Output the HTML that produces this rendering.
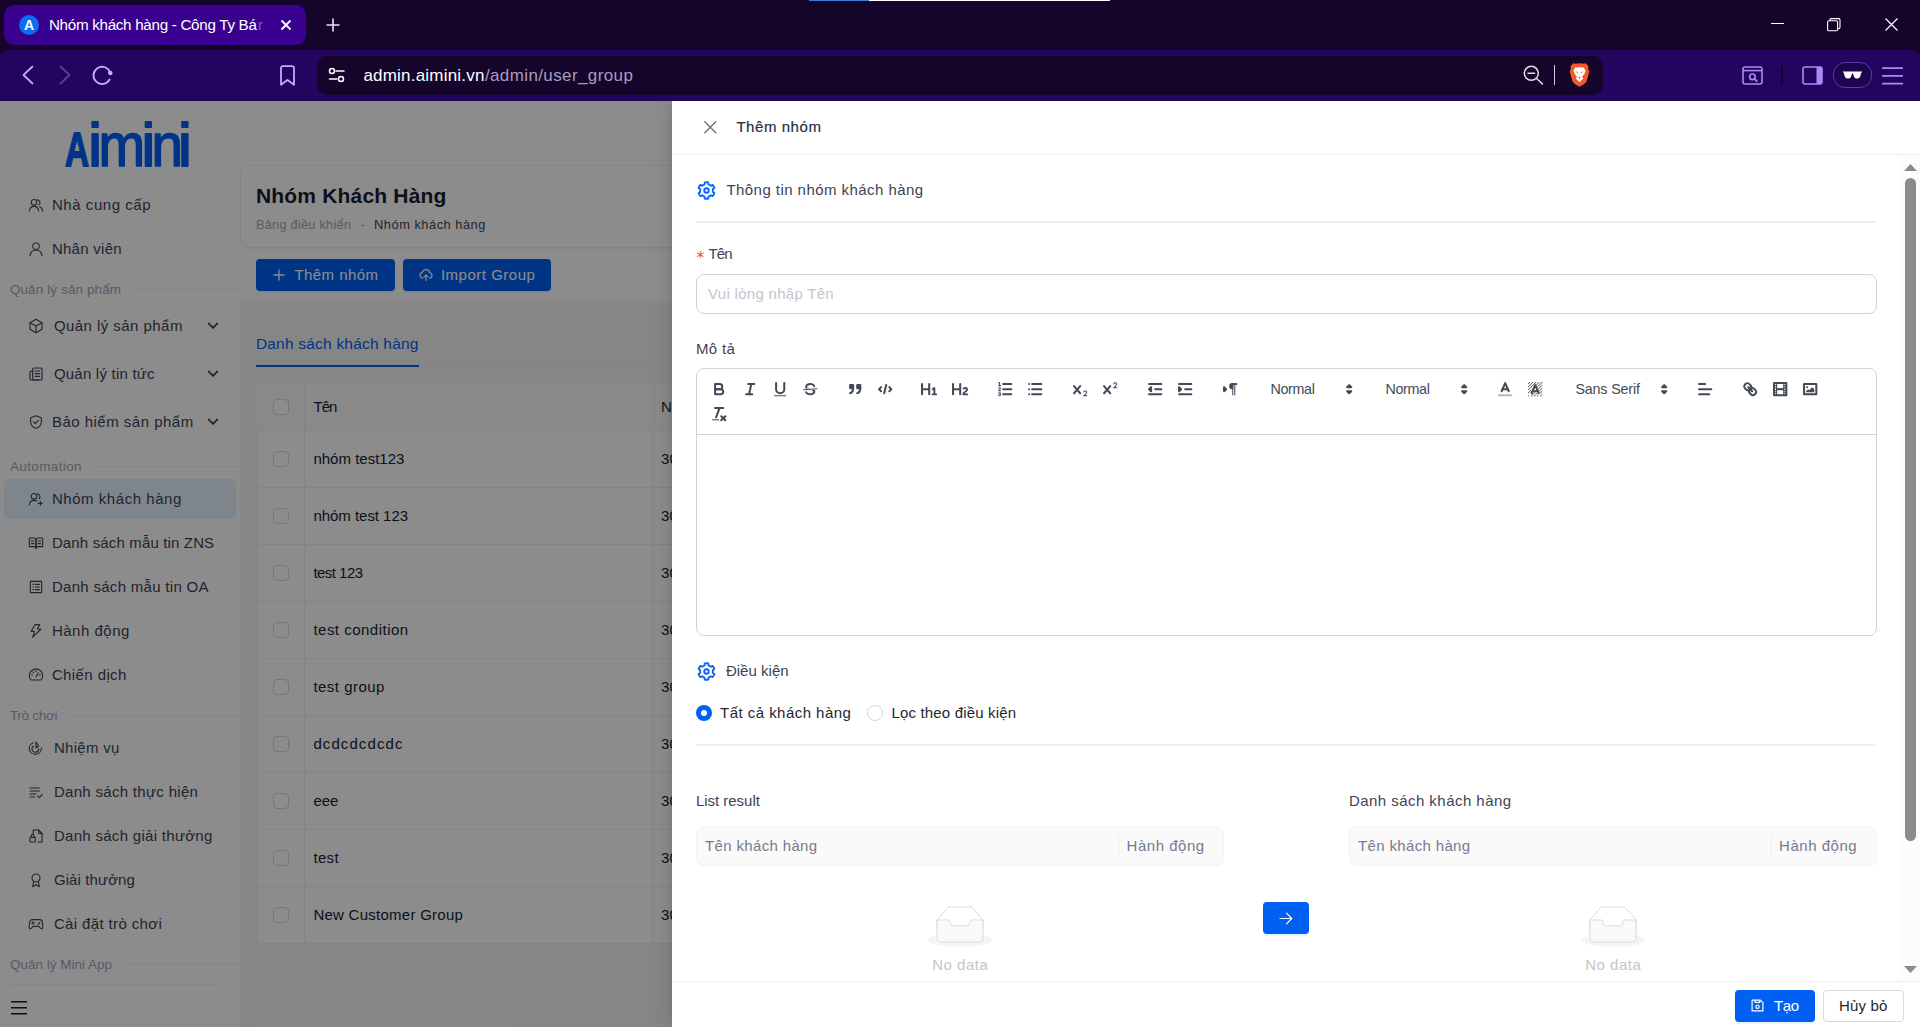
<!DOCTYPE html>
<html lang="vi"><head><meta charset="utf-8"><title>Nhóm khách hàng - Công Ty Bán</title>
<style>
*{box-sizing:border-box;margin:0;padding:0}
html,body{width:1920px;height:1027px;overflow:hidden;background:#fff}
body{font-family:"Liberation Sans",sans-serif;position:relative}
.t{position:absolute;white-space:nowrap;display:block}
.abs{position:absolute}
svg{position:absolute;overflow:visible}
.ic{fill:none;stroke:#3f4254;stroke-width:1.5;stroke-linecap:round;stroke-linejoin:round}
.qs{fill:none;stroke:#444a55;stroke-width:2;stroke-linecap:round;stroke-linejoin:round}
.qf{fill:#444a55}
.qt{stroke-width:1}
.ln{position:absolute;background:#eff2f5;height:1px}
.cb{position:absolute;width:16px;height:16px;border:1px solid #d9d9d9;border-radius:4px;background:#fff;left:273px}
.row{position:absolute;left:257px;width:500px;height:57px;border-bottom:1px solid #f0f0f0}
</style></head>
<body>
<div class="abs" style="left:0;top:101px;width:240px;height:926px;background:#fff"></div><svg style="left:60px;top:116px" width="134" height="56" viewBox="60 116 134 56" font-family="Liberation Sans, sans-serif" fill="#0060f7" stroke="#0060f7" stroke-linejoin="round" stroke-width="1.9"><text y="165.700" font-size="62"><tspan x="65" font-size="48.500" font-weight="700" stroke-width="1.800" textLength="24" lengthAdjust="spacingAndGlyphs">A</tspan><tspan x="88.300">i</tspan><tspan x="98.500" stroke-width="1.600" textLength="46.500" lengthAdjust="spacingAndGlyphs">m</tspan><tspan x="141.400">i</tspan><tspan x="151.500" stroke-width="1.600" textLength="31.500" lengthAdjust="spacingAndGlyphs">n</tspan><tspan x="178.100">i</tspan></text></svg><svg class="ic" style="left:27.7px;top:197.0px;stroke-width:1.65" width="16" height="16" viewBox="0 0 24 24"><circle cx="9" cy="8" r="4.2"/><path d="M2 21c.6-4.6 3.4-7 7-7s6.4 2.400 7 7"/><path d="M14 4.300a4.200 4.200 0 0 1 2.500 7.400M17.500 14.500c2.600.9 4.100 3.200 4.500 6.500"/></svg><span class="t" style="left:51.9px;top:194.69px;font-size:15px;line-height:20px;color:#3f4254;letter-spacing:0.56px;">Nhà cung cấp</span><svg class="ic" style="left:27.7px;top:241.0px;stroke-width:1.65" width="16" height="16" viewBox="0 0 24 24"><circle cx="12" cy="8" r="5"/><path d="M3 22c.8-5.400 4.400-8.500 9-8.500s8.200 3.100 9 8.500"/></svg><span class="t" style="left:51.9px;top:238.69px;font-size:15px;line-height:20px;color:#3f4254;letter-spacing:0.27px;">Nhân viên</span><span class="t" style="left:9.9px;top:279.83px;font-size:13.5px;line-height:20px;color:#a1a5b7;letter-spacing:0.11px;">Quản lý sản phẩm</span><div class="ln" style="left:132px;top:289px;width:108px"></div><svg class="ic" style="left:28px;top:318.0px;stroke-width:1.65" width="16" height="16" viewBox="0 0 24 24"><path d="M12 2l9 5v10l-9 5l-9-5V7z"/><path d="M3 7l9 5l9-5M12 12v10"/></svg><span class="t" style="left:53.9px;top:315.69px;font-size:15px;line-height:20px;color:#3f4254;letter-spacing:0.45px;">Quản lý sản phẩm</span><svg style="left:207px;top:322px" width="12" height="8" viewBox="0 0 12 8"><path d="M1.8 1.6L6 5.8L10.2 1.6" fill="none" stroke="#3f4254" stroke-width="1.9" stroke-linecap="round" stroke-linejoin="round"/></svg><svg class="ic" style="left:28px;top:366.0px;stroke-width:1.65" width="16" height="16" viewBox="0 0 24 24"><rect x="7" y="3" width="14" height="18" rx="1.500"/><path d="M7 8H4.500A1.500 1.500 0 0 0 3 9.500V19a2 2 0 0 0 2 2h12"/><path d="M10.500 7.500h7M10.500 11.500h7M10.500 15.500h7"/></svg><span class="t" style="left:53.9px;top:363.69px;font-size:15px;line-height:20px;color:#3f4254;letter-spacing:0.22px;">Quản lý tin tức</span><svg style="left:207px;top:370px" width="12" height="8" viewBox="0 0 12 8"><path d="M1.8 1.6L6 5.8L10.2 1.6" fill="none" stroke="#3f4254" stroke-width="1.9" stroke-linecap="round" stroke-linejoin="round"/></svg><svg class="ic" style="left:27.7px;top:414.0px;stroke-width:1.65" width="16" height="16" viewBox="0 0 24 24"><path d="M12 2.500l8 3v6c0 5-3.400 8.600-8 10c-4.600-1.400-8-5-8-10v-6z"/><path d="M8.500 12l2.500 2.500l4.500-5"/></svg><span class="t" style="left:51.9px;top:411.69px;font-size:15px;line-height:20px;color:#3f4254;letter-spacing:0.49px;">Bảo hiểm sản phẩm</span><svg style="left:207px;top:418px" width="12" height="8" viewBox="0 0 12 8"><path d="M1.8 1.6L6 5.8L10.2 1.6" fill="none" stroke="#3f4254" stroke-width="1.9" stroke-linecap="round" stroke-linejoin="round"/></svg><span class="t" style="left:9.9px;top:456.83px;font-size:13.5px;line-height:20px;color:#a1a5b7;letter-spacing:0.38px;">Automation</span><div class="ln" style="left:92px;top:466px;width:148px"></div><div class="abs" style="left:4px;top:479px;width:232px;height:40px;background:#e6f4ff;border-radius:5px"></div><svg class="ic" style="left:27.7px;top:491.0px;stroke-width:1.65" width="16" height="16" viewBox="0 0 24 24"><circle cx="9" cy="8" r="4.200"/><path d="M2 21c.6-4.600 3.400-7 7-7c1.600 0 3 .4 4.200 1.200"/><path d="M14 4.300a4.200 4.200 0 0 1 2.500 7.400"/><path d="M18.500 15.500v6M15.500 18.500h6"/></svg><span class="t" style="left:51.9px;top:488.69px;font-size:15px;line-height:20px;color:#3f4254;letter-spacing:0.55px;">Nhóm khách hàng</span><svg class="ic" style="left:27.7px;top:535.0px;stroke-width:1.65" width="16" height="16" viewBox="0 0 24 24"><path d="M12 6v14"/><path d="M2 4.500h7a3 3 0 0 1 3 3v12.500a2.500 2.500 0 0 0-2.500-2.500H2zM22 4.500h-7a3 3 0 0 0-3 3v12.500a2.500 2.500 0 0 1 2.500-2.500H22z"/><path d="M5 9h4M5 13h4M15 9h4M15 13h4"/></svg><span class="t" style="left:51.9px;top:532.7px;font-size:15px;line-height:20px;color:#3f4254;letter-spacing:0.15px;">Danh sách mẫu tin ZNS</span><svg class="ic" style="left:27.7px;top:579.0px;stroke-width:1.65" width="16" height="16" viewBox="0 0 24 24"><rect x="3.500" y="3.500" width="17" height="17" rx="0.300"/><path d="M7.500 8h1M11 8h6M7.500 12h1M11 12h6M7.500 16h1M11 16h6"/></svg><span class="t" style="left:51.9px;top:576.7px;font-size:15px;line-height:20px;color:#3f4254;letter-spacing:0.30px;">Danh sách mẫu tin OA</span><svg class="ic" style="left:27.7px;top:623.0px;stroke-width:1.65" width="16" height="16" viewBox="0 0 24 24"><path d="M10.500 2.500h7l-3.500 6.500h5.500L7 21.500l2.800-9H4.800z"/></svg><span class="t" style="left:51.9px;top:620.7px;font-size:15px;line-height:20px;color:#3f4254;letter-spacing:0.51px;">Hành động</span><svg class="ic" style="left:27.7px;top:667.0px;stroke-width:1.65" width="16" height="16" viewBox="0 0 24 24"><path d="M4.500 19.500a10 10 0 1 1 15 0z"/><path d="M12 14.500l3.500-5.500"/><path d="M5.500 12h1.500M12 5.500v1.500M18.500 12H17M7.400 7.400l1 1"/></svg><span class="t" style="left:51.9px;top:664.7px;font-size:15px;line-height:20px;color:#3f4254;letter-spacing:0.40px;">Chiến dịch</span><span class="t" style="left:9.9px;top:705.83px;font-size:13.5px;line-height:20px;color:#a1a5b7;letter-spacing:-0.27px;">Trò chơi</span><div class="ln" style="left:68px;top:715px;width:172px"></div><svg class="ic" style="left:28px;top:740.0px;stroke-width:1.65" width="16" height="16" viewBox="0 0 24 24"><path d="M12 3v9l4-3z"/><path d="M8 4a9 9 0 1 0 12 8"/><path d="M8.500 9a5 5 0 1 0 7.500 4"/></svg><span class="t" style="left:53.9px;top:737.7px;font-size:15px;line-height:20px;color:#3f4254;letter-spacing:0.31px;">Nhiệm vụ</span><svg class="ic" style="left:28px;top:784.0px;stroke-width:1.65" width="16" height="16" viewBox="0 0 24 24"><path d="M3 6h14M3 10.500h14M3 15h9M3 19.500h7"/><path d="M14.500 18l2.500 2.500l4.500-5"/></svg><span class="t" style="left:53.9px;top:781.7px;font-size:15px;line-height:20px;color:#3f4254;letter-spacing:0.31px;">Danh sách thực hiện</span><svg class="ic" style="left:28px;top:828.0px;stroke-width:1.65" width="16" height="16" viewBox="0 0 24 24"><path d="M8 3h8l5 5v12.500a.5.500 0 0 1-.5.500H15"/><path d="M16 3v5h5"/><rect x="3" y="14" width="8" height="7" rx="1"/><path d="M5 14v-2.500a2 2 0 0 1 4 0V14"/><path d="M8 3v5"/></svg><span class="t" style="left:53.9px;top:825.7px;font-size:15px;line-height:20px;color:#3f4254;letter-spacing:0.30px;">Danh sách giải thưởng</span><svg class="ic" style="left:28px;top:872.0px;stroke-width:1.65" width="16" height="16" viewBox="0 0 24 24"><circle cx="12" cy="9" r="6"/><path d="M8.500 14.500L7 22l5-3l5 3l-1.500-7.500"/></svg><span class="t" style="left:53.9px;top:869.7px;font-size:15px;line-height:20px;color:#3f4254;letter-spacing:0.11px;">Giải thưởng</span><svg class="ic" style="left:28px;top:916.0px;stroke-width:1.65" width="16" height="16" viewBox="0 0 24 24"><path d="M6.500 5.500h11a4 4 0 0 1 4 4l.8 7.500a2 2 0 0 1-3.600 1.300L16 15.500H8l-2.700 2.800A2 2 0 0 1 1.700 17l.8-7.500a4 4 0 0 1 4-4z"/><path d="M7.500 8.500v4M5.500 10.500h4M15 12.500l3-3"/></svg><span class="t" style="left:53.9px;top:913.7px;font-size:15px;line-height:20px;color:#3f4254;letter-spacing:0.37px;">Cài đặt trò chơi</span><span class="t" style="left:9.9px;top:954.83px;font-size:13.5px;line-height:20px;color:#a1a5b7;">Quản lý Mini App</span><div class="ln" style="left:122px;top:964px;width:118px"></div><div class="ln" style="left:10px;top:984px;width:207px"></div><svg style="left:11px;top:1000px" width="16" height="16" viewBox="0 0 16 16"><path d="M0 1.800H16M0 7.800H16M0 13.800H16" stroke="#181c32" stroke-width="1.600" fill="none"/></svg>
<div class="abs" style="left:240px;top:101px;width:1680px;height:926px;background:#f5f5f5"></div><div class="abs" style="left:240px;top:101px;width:1680px;height:200px;background:#fff"></div><div class="abs" style="left:240px;top:165px;width:1680px;height:83px;border:1px solid #f1f1f4;border-radius:8px;box-shadow:0 2px 4px rgba(0,0,0,.03)"></div><span class="t" style="left:255.9px;top:182.17px;font-size:21px;line-height:28px;color:#181c32;font-weight:700;letter-spacing:0.19px;">Nhóm Khách Hàng</span><span class="t" style="left:255.9px;top:215.39px;font-size:12.8px;line-height:20px;color:#a1a5b7;letter-spacing:0.24px;">Bảng điều khiển</span><span class="t" style="left:360.9px;top:215.39px;font-size:12.8px;line-height:20px;color:#a1a5b7;">-</span><span class="t" style="left:374.1px;top:215.39px;font-size:12.8px;line-height:20px;color:#3f4254;letter-spacing:0.53px;">Nhóm khách hàng</span><div class="abs" style="left:256px;top:259px;width:139px;height:32px;background:#0060f2;border-radius:4px;box-shadow:0 2px 0 rgba(5,95,255,.08)"></div><svg style="left:273px;top:269px" width="12" height="12" viewBox="0 0 12 12"><path d="M6 0.500V11.500M0.500 6H11.500" stroke="#fff" stroke-width="1.300" fill="none"/></svg><span class="t" style="left:294.4px;top:264.89px;font-size:15px;line-height:20px;color:#fff;letter-spacing:0.46px;">Thêm nhóm</span><div class="abs" style="left:403px;top:259px;width:148px;height:32px;background:#0060f2;border-radius:4px;box-shadow:0 2px 0 rgba(5,95,255,.08)"></div><svg style="left:419px;top:268.500px" width="14" height="13" viewBox="0 0 14 13"><path d="M3.600 9.200A3 3 0 0 1 3.400 3.300A3.800 3.800 0 0 1 10.700 3.500A2.900 2.900 0 0 1 10.500 9.200" fill="none" stroke="#fff" stroke-width="1.200" stroke-linecap="round"/><path d="M7 11.500V6M5 7.800L7 5.800L9 7.800" fill="none" stroke="#fff" stroke-width="1.200" stroke-linecap="round" stroke-linejoin="round"/></svg><span class="t" style="left:440.9px;top:264.89px;font-size:15px;line-height:20px;color:#fff;letter-spacing:0.51px;">Import Group</span><span class="t" style="left:255.9px;top:333.65px;font-size:15.5px;line-height:20px;color:#0060f2;letter-spacing:0.21px;">Danh sách khách hàng</span><div class="abs" style="left:256px;top:366px;width:1640px;height:1px;background:#ececef"></div><div class="abs" style="left:256px;top:365px;width:163px;height:2px;background:#0060f2"></div><div class="abs" style="left:257px;top:383.500px;width:1640px;height:560px;background:#fff;border:1px solid #f0f0f0;border-radius:8px 8px 0 0"></div><div class="abs" style="left:257px;top:384px;width:1640px;height:46.500px;background:#fafafa;border-bottom:1px solid #f0f0f0"></div><div class="abs" style="left:304px;top:384px;width:1px;height:559px;background:#f0f0f0"></div><div class="abs" style="left:652px;top:384px;width:1px;height:559px;background:#f0f0f0"></div><div class="cb" style="top:399px"></div><span class="t" style="left:313.6px;top:397.19px;font-size:15px;line-height:20px;color:#181c32;letter-spacing:-1.03px;">Tên</span><span class="t" style="left:660.9px;top:397.19px;font-size:15px;line-height:20px;color:#181c32;letter-spacing:0.4px">Ngày</span><div class="abs" style="left:257px;top:487px;width:1640px;height:1px;background:#f0f0f0"></div><div class="cb" style="top:451px"></div><span class="t" style="left:313.4px;top:448.69px;font-size:15px;line-height:20px;color:#181c32;letter-spacing:0.01px;">nhóm test123</span><span class="t" style="left:660.9px;top:448.69px;font-size:15px;line-height:20px;color:#181c32;letter-spacing:0.3px">30</span><div class="abs" style="left:257px;top:544px;width:1640px;height:1px;background:#f0f0f0"></div><div class="cb" style="top:508px"></div><span class="t" style="left:313.4px;top:505.69px;font-size:15px;line-height:20px;color:#181c32;letter-spacing:-0.03px;">nhóm test 123</span><span class="t" style="left:660.9px;top:505.69px;font-size:15px;line-height:20px;color:#181c32;letter-spacing:0.3px">30</span><div class="abs" style="left:257px;top:601px;width:1640px;height:1px;background:#f0f0f0"></div><div class="cb" style="top:565px"></div><span class="t" style="left:313.4px;top:562.7px;font-size:15px;line-height:20px;color:#181c32;letter-spacing:-0.53px;">test 123</span><span class="t" style="left:660.9px;top:562.7px;font-size:15px;line-height:20px;color:#181c32;letter-spacing:0.3px">30</span><div class="abs" style="left:257px;top:658px;width:1640px;height:1px;background:#f0f0f0"></div><div class="cb" style="top:622px"></div><span class="t" style="left:313.4px;top:619.7px;font-size:15px;line-height:20px;color:#181c32;letter-spacing:0.49px;">test condition</span><span class="t" style="left:660.9px;top:619.7px;font-size:15px;line-height:20px;color:#181c32;letter-spacing:0.3px">30</span><div class="abs" style="left:257px;top:715px;width:1640px;height:1px;background:#f0f0f0"></div><div class="cb" style="top:679px"></div><span class="t" style="left:313.4px;top:676.7px;font-size:15px;line-height:20px;color:#181c32;letter-spacing:0.48px;">test group</span><span class="t" style="left:660.9px;top:676.7px;font-size:15px;line-height:20px;color:#181c32;letter-spacing:0.3px">30</span><div class="abs" style="left:257px;top:772px;width:1640px;height:1px;background:#f0f0f0"></div><div class="cb" style="top:736px"></div><span class="t" style="left:313.4px;top:733.7px;font-size:15px;line-height:20px;color:#181c32;letter-spacing:1.09px;">dcdcdcdcdc</span><span class="t" style="left:660.9px;top:733.7px;font-size:15px;line-height:20px;color:#181c32;letter-spacing:0.3px">30</span><div class="abs" style="left:257px;top:829px;width:1640px;height:1px;background:#f0f0f0"></div><div class="cb" style="top:793px"></div><span class="t" style="left:313.4px;top:790.7px;font-size:15px;line-height:20px;color:#181c32;letter-spacing:-0.02px;">eee</span><span class="t" style="left:660.9px;top:790.7px;font-size:15px;line-height:20px;color:#181c32;letter-spacing:0.3px">30</span><div class="abs" style="left:257px;top:886px;width:1640px;height:1px;background:#f0f0f0"></div><div class="cb" style="top:850px"></div><span class="t" style="left:313.4px;top:847.7px;font-size:15px;line-height:20px;color:#181c32;letter-spacing:0.34px;">test</span><span class="t" style="left:660.9px;top:847.7px;font-size:15px;line-height:20px;color:#181c32;letter-spacing:0.3px">30</span><div class="abs" style="left:257px;top:943px;width:1640px;height:1px;background:#f0f0f0"></div><div class="cb" style="top:907px"></div><span class="t" style="left:313.4px;top:904.7px;font-size:15px;line-height:20px;color:#181c32;letter-spacing:0.26px;">New Customer Group</span><span class="t" style="left:660.9px;top:904.7px;font-size:15px;line-height:20px;color:#181c32;letter-spacing:0.3px">30</span>
<div class="abs" style="left:0;top:101px;width:1920px;height:926px;background:rgba(0,0,0,.45)"></div>
<div class="abs" style="left:672px;top:101px;width:1248px;height:926px;background:#fff;box-shadow:-6px 0 16px rgba(0,0,0,.08),-3px 0 6px -4px rgba(0,0,0,.12)"></div><svg style="left:703.600px;top:120.700px" width="12.600" height="12.600" viewBox="0 0 13 13"><path d="M0.800 0.800L12.200 12.200M12.200 0.800L0.800 12.200" stroke="#6c6c72" stroke-width="1.350" fill="none" stroke-linecap="round"/></svg><span class="t" style="left:736.4px;top:114.99px;font-size:15px;line-height:24px;color:#2b2f42;letter-spacing:0.56px;-webkit-text-stroke:0.2px #2b2f42;">Thêm nhóm</span><div class="abs" style="left:672px;top:154px;width:1248px;height:1px;background:#f0f0f0"></div><svg style="left:695.650px;top:179.6px;fill:none;stroke:#0d65f8;stroke-width:1.850;stroke-linejoin:round;stroke-linecap:round" width="21" height="21" viewBox="0 0 21 21"><path d="M8.58 4.40L8.70 2.40A8.30 8.30 0 0 1 12.30 2.40L12.42 4.40A6.40 6.40 0 0 1 14.82 5.78L16.62 4.89A8.30 8.30 0 0 1 18.42 8.00L16.75 9.11A6.40 6.40 0 0 1 16.75 11.89L18.42 13.00A8.30 8.30 0 0 1 16.62 16.11L14.82 15.22A6.40 6.40 0 0 1 12.42 16.60L12.30 18.60A8.30 8.30 0 0 1 8.70 18.60L8.58 16.60A6.40 6.40 0 0 1 6.18 15.22L4.38 16.11A8.30 8.30 0 0 1 2.58 13.00L4.25 11.89A6.40 6.40 0 0 1 4.25 9.11L2.58 8.00A8.30 8.30 0 0 1 4.38 4.89L6.18 5.78A6.40 6.40 0 0 1 8.58 4.40Z"/><circle cx="10.500" cy="10.500" r="2.250"/></svg><span class="t" style="left:726.4px;top:178.0px;font-size:15px;line-height:24px;color:#3f4254;letter-spacing:0.45px;">Thông tin nhóm khách hàng</span><div class="abs" style="left:696px;top:221px;width:1180px;height:2px;background:#efeff2"></div><span class="t" style="left:696.5px;top:247.75px;font-size:15.5px;line-height:20px;color:#f24b1c;font-family:'DejaVu Sans',sans-serif;">*</span><span class="t" style="left:708.6px;top:243.69px;font-size:15px;line-height:20px;color:#3f4254;letter-spacing:-0.93px;">Tên</span><div class="abs" style="left:696px;top:274px;width:1181px;height:40px;border:1px solid #d2d3d9;border-radius:8px;background:#fff"></div><span class="t" style="left:708.1px;top:283.69px;font-size:15px;line-height:20px;color:#c4c4cc;letter-spacing:0.29px;">Vui lòng nhập Tên</span><span class="t" style="left:695.9px;top:338.69px;font-size:15px;line-height:20px;color:#3f4254;letter-spacing:0.37px;">Mô tả</span><div class="abs" style="left:696px;top:368px;width:1181px;height:268px;border:1px solid #d2d3d9;border-radius:8px;background:#fff"></div><div class="abs" style="left:697px;top:434px;width:1179px;height:1px;background:#d2d3d9"></div><svg style="left:710.4px;top:380.3px" width="18.4" height="18.4" viewBox="0 0 18 18"><path class="qs" d="M5,4H9.5A2.5,2.5,0,0,1,12,6.500v0A2.500,2.500,0,0,1,9.500,9H5V4Z"/><path class="qs" d="M5,9h5.500A2.500,2.500,0,0,1,13,11.500v0A2.500,2.500,0,0,1,10.500,14H5V9Z"/></svg><svg style="left:740.6px;top:380.3px" width="18.4" height="18.4" viewBox="0 0 18 18"><line class="qs" x1="7" x2="13" y1="4" y2="4"/><line class="qs" x1="5" x2="11" y1="14" y2="14"/><line class="qs" x1="8" x2="10" y1="14" y2="4"/></svg><svg style="left:770.8px;top:380.3px" width="18.4" height="18.4" viewBox="0 0 18 18"><path class="qs" d="M5,3V9a4.012,4.012,0,0,0,4,4H9a4.012,4.012,0,0,0,4-4V3"/><rect class="qf" height="1" rx="0.500" ry="0.500" width="12" x="3" y="15"/></svg><svg style="left:801.0px;top:380.3px" width="18.4" height="18.4" viewBox="0 0 18 18"><line class="qs qt" x1="15.500" x2="2.500" y1="8.500" y2="9.500"/><path class="qf" d="M9.007,8C6.542,7.791,6,7.519,6,6.500,6,5.792,7.283,5,9,5c1.571,0,2.765.679,2.969,1.309a1,1,0,0,0,1.900-.617C13.356,4.106,11.354,3,9,3,6.200,3,4,4.538,4,6.500a3.200,3.200,0,0,0,.5,1.843Z"/><path class="qf" d="M8.984,10C11.457,10.208,12,10.479,12,11.500c0,0.708-1.283,1.500-3,1.500-1.571,0-2.765-.679-2.969-1.309a1,1,0,1,0-1.900.617C4.644,13.894,6.646,15,9,15c2.800,0,5-1.538,5-3.500a3.200,3.200,0,0,0-.5-1.843Z"/></svg><svg style="left:846.0px;top:380.3px" width="18.4" height="18.4" viewBox="0 0 18 18"><rect class="qs qf" height="3" width="3" x="4" y="5"/><rect class="qs qf" height="3" width="3" x="11" y="5"/><path class="qs qf" d="M7,8c0,4.031-3,5-3,5"/><path class="qs qf" d="M14,8c0,4.031-3,5-3,5"/></svg><svg style="left:875.8px;top:380.3px" width="18.4" height="18.4" viewBox="0 0 18 18"><polyline class="qs" points="5 7 3 9 5 11"/><polyline class="qs" points="13 7 15 9 13 11"/><line class="qs" x1="10" x2="8" y1="5" y2="13"/></svg><svg style="left:920.3px;top:380.3px" width="18.4" height="18.4" viewBox="0 0 18 18"><path class="qf" d="M10,4V14a1,1,0,0,1-2,0V10H3v4a1,1,0,0,1-2,0V4A1,1,0,0,1,3,4V8H8V4a1,1,0,0,1,2,0Zm6.068,9.209H14.990V7.599a.541.541,0,0,0-.605-.605h-.627a1.011,1.011,0,0,0-.748.297L11.645,8.566a.544.544,0,0,0-.022.858l.286.308a.539.539,0,0,0,.847.033l.099-.088a1.214,1.214,0,0,0,.242-.353h.022s-.011.309-.011.605V13.209H12.041a.541.541,0,0,0-.605.605v.439a.541.541,0,0,0,.605.605h4.027a.541.541,0,0,0,.605-.605v-.439A.541.541,0,0,0,16.068,13.209Z"/></svg><svg style="left:950.5px;top:380.3px" width="18.4" height="18.4" viewBox="0 0 18 18"><path class="qf" d="M16.740,13.814v.439a.541.541,0,0,1-.605.605H11.855a.584.584,0,0,1-.649-.605V14.013c0-2.905,3.399-3.422,3.399-4.555a.777.777,0,0,0-.847-.781,1.177,1.177,0,0,0-.836.385c-.275.264-.561.374-.858.132l-.429-.341c-.308-.242-.385-.518-.154-.814a2.972,2.972,0,0,1,2.454-1.177,2.454,2.454,0,0,1,2.684,2.409c0,2.453-3.179,2.927-3.278,3.938h2.794A.541.541,0,0,1,16.740,13.814ZM9,3A1,1,0,0,0,8,4V8H3V4A1,1,0,0,0,1,4V14a1,1,0,0,0,2,0V10H8v4a1,1,0,0,0,2,0V4A1,1,0,0,0,9,3Z"/></svg><svg style="left:995.8px;top:380.3px" width="18.4" height="18.4" viewBox="0 0 18 18"><line class="qs" x1="7" x2="15" y1="4" y2="4"/><line class="qs" x1="7" x2="15" y1="9" y2="9"/><line class="qs" x1="7" x2="15" y1="14" y2="14"/><line class="qs qt" x1="2.500" x2="4.500" y1="5.500" y2="5.500"/><path class="qf" d="M3.500,6A0.500,0.500,0,0,1,3,5.500V3.085l-0.276.138A0.500,0.500,0,0,1,2.053,3c-0.124-.247-0.023-0.324.224-0.447l1-.5A0.500,0.500,0,0,1,4,2.500v3A0.500,0.500,0,0,1,3.500,6Z"/><path class="qs qt" d="M4.500,10.500h-2c0-.234,1.850-1.076,1.850-2.234A0.959,0.959,0,0,0,2.500,8.156"/><path class="qs qt" d="M2.500,14.846a0.959,0.959,0,0,0,1.850-.109A0.700,0.700,0,0,0,3.750,14a0.688,0.688,0,0,0,.6-0.736,0.959,0.959,0,0,0-1.850-.109"/></svg><svg style="left:1026.0px;top:380.3px" width="18.4" height="18.4" viewBox="0 0 18 18"><line class="qs" x1="6" x2="15" y1="4" y2="4"/><line class="qs" x1="6" x2="15" y1="9" y2="9"/><line class="qs" x1="6" x2="15" y1="14" y2="14"/><line class="qs" x1="3" x2="3" y1="4" y2="4"/><line class="qs" x1="3" x2="3" y1="9" y2="9"/><line class="qs" x1="3" x2="3" y1="14" y2="14"/></svg><svg style="left:1070.8px;top:380.3px" width="18.4" height="18.4" viewBox="0 0 18 18"><path class="qf" d="M15.500,15H13.861a3.858,3.858,0,0,0,1.914-2.975,1.800,1.800,0,0,0-1.600-1.751A1.921,1.921,0,0,0,12.021,11.700a0.500,0.500,0,1,0,.957.291a0.914,0.914,0,0,1,1.053-.725,0.810,0.810,0,0,1,.744.762c0,1.076-1.170,1.870-1.940,2.431A1.456,1.456,0,0,0,12,15.500a0.500,0.500,0,0,0,.5.500h3A0.500,0.500,0,0,0,15.500,15Z"/><path class="qf" d="M9.650,5.241a1,1,0,0,0-1.409.108L6,7.964,3.759,5.349a1,1,0,1,0-1.519,1.300L4.683,9.500,2.241,12.350a1,1,0,1,0,1.519,1.300L6,11.036,8.241,13.650a1,1,0,0,0,1.519-1.300L7.317,9.500,9.759,6.651A1,1,0,0,0,9.650,5.241Z"/></svg><svg style="left:1100.8px;top:380.3px" width="18.4" height="18.4" viewBox="0 0 18 18"><path class="qf" d="M15.500,7H13.861a4.015,4.015,0,0,0,1.914-2.975,1.800,1.800,0,0,0-1.600-1.751A1.922,1.922,0,0,0,12.021,3.700a0.500,0.500,0,1,0,.957.291,0.917,0.917,0,0,1,1.053-.725,0.810,0.810,0,0,1,.744.762c0,1.077-1.164,1.925-1.934,2.486A1.423,1.423,0,0,0,12,7.500a0.500,0.500,0,0,0,.5.500h3A0.500,0.500,0,0,0,15.500,7Z"/><path class="qf" d="M9.650,5.241a1,1,0,0,0-1.409.108L6,7.964,3.759,5.349a1,1,0,1,0-1.519,1.300L4.683,9.500,2.241,12.350a1,1,0,1,0,1.519,1.300L6,11.036,8.241,13.650a1,1,0,0,0,1.519-1.300L7.317,9.500,9.759,6.651A1,1,0,0,0,9.650,5.241Z"/></svg><svg style="left:1145.8px;top:380.3px" width="18.4" height="18.4" viewBox="0 0 18 18"><line class="qs" x1="3" x2="15" y1="14" y2="14"/><line class="qs" x1="3" x2="15" y1="4" y2="4"/><line class="qs" x1="9" x2="15" y1="9" y2="9"/><polyline class="qs" points="5 7 5 11 3 9 5 7"/></svg><svg style="left:1175.8px;top:380.3px" width="18.4" height="18.4" viewBox="0 0 18 18"><line class="qs" x1="3" x2="15" y1="14" y2="14"/><line class="qs" x1="3" x2="15" y1="4" y2="4"/><line class="qs" x1="9" x2="15" y1="9" y2="9"/><polyline class="qs qf" points="3 7 3 11 5 9 3 7"/></svg><svg style="left:1220.8px;top:380.3px" width="18.4" height="18.4" viewBox="0 0 18 18"><polygon class="qs qf" points="3 11 5 9 3 7 3 11"/><line class="qs qf" x1="15" x2="11" y1="4" y2="4"/><path class="qf" d="M11,3a3,3,0,0,0,0,6h1V3H11Z"/><rect class="qf" height="11" width="1" x="11" y="4"/><rect class="qf" height="11" width="1" x="13" y="4"/></svg><svg style="left:1339.8px;top:380.3px" width="18.4" height="18.4" viewBox="0 0 18 18"><polygon class="qs" points="7 11 9 13 11 11 7 11"/><polygon class="qs" points="7 7 9 5 11 7 7 7"/></svg><svg style="left:1454.8px;top:380.3px" width="18.4" height="18.4" viewBox="0 0 18 18"><polygon class="qs" points="7 11 9 13 11 11 7 11"/><polygon class="qs" points="7 7 9 5 11 7 7 7"/></svg><svg style="left:1495.8px;top:380.3px" width="18.4" height="18.4" viewBox="0 0 18 18"><line class="qs" style="opacity:.4" x1="3" x2="15" y1="15" y2="15"/><polyline class="qs" points="5.500 11 9 3 12.500 11"/><line class="qs" x1="11.630" x2="6.380" y1="9" y2="9"/></svg><svg style="left:1525.8px;top:380.3px" width="18.4" height="18.4" viewBox="0 0 18 18"><rect class="qf" x="3" y="2" width="1" height="1"/><rect class="qf" x="6" y="2" width="1" height="1"/><rect class="qf" x="9" y="2" width="1" height="1"/><rect class="qf" x="12" y="2" width="1" height="1"/><rect class="qf" x="15" y="2" width="1" height="1"/><rect class="qf" x="2" y="3" width="1" height="1"/><rect class="qf" x="5" y="3" width="1" height="1"/><rect class="qf" x="8" y="3" width="1" height="1"/><rect class="qf" x="11" y="3" width="1" height="1"/><rect class="qf" x="14" y="3" width="1" height="1"/><rect class="qf" x="4" y="4" width="1" height="1"/><rect class="qf" x="7" y="4" width="1" height="1"/><rect class="qf" x="10" y="4" width="1" height="1"/><rect class="qf" x="13" y="4" width="1" height="1"/><rect class="qf" x="3" y="5" width="1" height="1"/><rect class="qf" x="6" y="5" width="1" height="1"/><rect class="qf" x="12" y="5" width="1" height="1"/><rect class="qf" x="15" y="5" width="1" height="1"/><rect class="qf" x="2" y="6" width="1" height="1"/><rect class="qf" x="5" y="6" width="1" height="1"/><rect class="qf" x="11" y="6" width="1" height="1"/><rect class="qf" x="14" y="6" width="1" height="1"/><rect class="qf" x="4" y="7" width="1" height="1"/><rect class="qf" x="13" y="7" width="1" height="1"/><rect class="qf" x="3" y="8" width="1" height="1"/><rect class="qf" x="12" y="8" width="1" height="1"/><rect class="qf" x="15" y="8" width="1" height="1"/><rect class="qf" x="2" y="9" width="1" height="1"/><rect class="qf" x="14" y="9" width="1" height="1"/><rect class="qf" x="4" y="10" width="1" height="1"/><rect class="qf" x="13" y="10" width="1" height="1"/><rect class="qf" x="3" y="11" width="1" height="1"/><rect class="qf" x="15" y="11" width="1" height="1"/><rect class="qf" x="2" y="12" width="1" height="1"/><rect class="qf" x="8" y="12" width="1" height="1"/><rect class="qf" x="14" y="12" width="1" height="1"/><rect class="qf" x="7" y="13" width="1" height="1"/><rect class="qf" x="10" y="13" width="1" height="1"/><rect class="qf" x="6" y="14" width="1" height="1"/><rect class="qf" x="9" y="14" width="1" height="1"/><rect class="qf" x="15" y="14" width="1" height="1"/><rect class="qf" x="2" y="15" width="1" height="1"/><rect class="qf" x="5" y="15" width="1" height="1"/><rect class="qf" x="8" y="15" width="1" height="1"/><rect class="qf" x="11" y="15" width="1" height="1"/><rect class="qf" x="14" y="15" width="1" height="1"/><polyline class="qs" points="5.500 13 9 5 12.500 13"/><line class="qs" x1="11.630" x2="6.380" y1="11" y2="11"/></svg><svg style="left:1654.8px;top:380.3px" width="18.4" height="18.4" viewBox="0 0 18 18"><polygon class="qs" points="7 11 9 13 11 11 7 11"/><polygon class="qs" points="7 7 9 5 11 7 7 7"/></svg><svg style="left:1695.8px;top:380.3px" width="18.4" height="18.4" viewBox="0 0 18 18"><line class="qs" x1="3" x2="15" y1="9" y2="9"/><line class="qs" x1="3" x2="13" y1="14" y2="14"/><line class="qs" x1="3" x2="9" y1="4" y2="4"/></svg><svg style="left:1740.8px;top:380.3px" width="18.4" height="18.4" viewBox="0 0 18 18"><line class="qs" x1="7" x2="11" y1="7" y2="11"/><path class="qs" d="M8.900,4.577a3.476,3.476,0,0,1,.36,4.679A3.476,3.476,0,0,1,4.577,8.900C3.185,7.500,2.035,6.400,4.217,4.217S7.500,3.185,8.900,4.577Z"/><path class="qs" d="M13.423,9.100a3.476,3.476,0,0,0-4.679-.36,3.476,3.476,0,0,0,.36,4.679c1.392,1.392,2.500,2.542,4.679.36S14.815,10.500,13.423,9.100Z"/></svg><svg style="left:1770.8px;top:380.3px" width="18.4" height="18.4" viewBox="0 0 18 18"><rect class="qs" height="12" width="12" x="3" y="3"/><rect class="qf" height="12" width="1" x="5" y="3"/><rect class="qf" height="12" width="1" x="12" y="3"/><rect class="qf" height="2" width="8" x="5" y="8"/><rect class="qf" height="1" width="3" x="3" y="5"/><rect class="qf" height="1" width="3" x="3" y="7"/><rect class="qf" height="1" width="3" x="3" y="10"/><rect class="qf" height="1" width="3" x="3" y="12"/><rect class="qf" height="1" width="3" x="12" y="5"/><rect class="qf" height="1" width="3" x="12" y="7"/><rect class="qf" height="1" width="3" x="12" y="10"/><rect class="qf" height="1" width="3" x="12" y="12"/></svg><svg style="left:1800.8px;top:380.3px" width="18.4" height="18.4" viewBox="0 0 18 18"><rect class="qs" height="10" width="12" x="3" y="4"/><circle class="qf" cx="6" cy="7" r="1"/><polyline class="qf" points="5 12 5 11 7 9 8 10 11 7 13 9 13 12 5 12"/></svg><svg style="left:710.4px;top:405.3px" width="18.4" height="18.4" viewBox="0 0 18 18"><line class="qs" x1="5" x2="13" y1="3" y2="3"/><line class="qs" x1="6" x2="9.350" y1="12" y2="3"/><line class="qs" x1="11" x2="15" y1="11" y2="15"/><line class="qs" x1="15" x2="11" y1="11" y2="15"/><rect class="qf" height="1" rx="0.500" ry="0.500" width="7" x="2" y="14"/></svg><span class="t" style="left:1270.4px;top:379.06px;font-size:14.3px;line-height:20px;color:#444a55;letter-spacing:-0.32px;">Normal</span><span class="t" style="left:1385.4px;top:379.06px;font-size:14.3px;line-height:20px;color:#444a55;letter-spacing:-0.32px;">Normal</span><span class="t" style="left:1575.4px;top:379.06px;font-size:14.3px;line-height:20px;color:#444a55;letter-spacing:-0.16px;">Sans Serif</span><svg style="left:695.650px;top:660.6px;fill:none;stroke:#0d65f8;stroke-width:1.850;stroke-linejoin:round;stroke-linecap:round" width="21" height="21" viewBox="0 0 21 21"><path d="M8.58 4.40L8.70 2.40A8.30 8.30 0 0 1 12.30 2.40L12.42 4.40A6.40 6.40 0 0 1 14.82 5.78L16.62 4.89A8.30 8.30 0 0 1 18.42 8.00L16.75 9.11A6.40 6.40 0 0 1 16.75 11.89L18.42 13.00A8.30 8.30 0 0 1 16.62 16.11L14.82 15.22A6.40 6.40 0 0 1 12.42 16.60L12.30 18.60A8.30 8.30 0 0 1 8.70 18.60L8.58 16.60A6.40 6.40 0 0 1 6.18 15.22L4.38 16.11A8.30 8.30 0 0 1 2.58 13.00L4.25 11.89A6.40 6.40 0 0 1 4.25 9.11L2.58 8.00A8.30 8.30 0 0 1 4.38 4.89L6.18 5.78A6.40 6.40 0 0 1 8.58 4.40Z"/><circle cx="10.500" cy="10.500" r="2.250"/></svg><span class="t" style="left:725.9px;top:659.0px;font-size:15px;line-height:24px;color:#3f4254;letter-spacing:0.02px;">Điều kiện</span><div class="abs" style="left:696px;top:705px;width:16px;height:16px;border-radius:50%;background:#0060f2"></div><div class="abs" style="left:701px;top:710px;width:6px;height:6px;border-radius:50%;background:#fff"></div><span class="t" style="left:720.1px;top:703.0px;font-size:15px;line-height:20px;color:#252733;letter-spacing:0.46px;">Tất cả khách hàng</span><div class="abs" style="left:867px;top:705px;width:16px;height:16px;border-radius:50%;border:1px solid #d9d9d9;background:#fff"></div><span class="t" style="left:891.4px;top:703.0px;font-size:15px;line-height:20px;color:#252733;letter-spacing:0.17px;">Lọc theo điều kiện</span><div class="abs" style="left:696px;top:744px;width:1180px;height:2px;background:#efeff2"></div><span class="t" style="left:695.9px;top:791.0px;font-size:15px;line-height:20px;color:#3f4254;letter-spacing:-0.02px;">List result</span><span class="t" style="left:1348.9px;top:791.0px;font-size:15px;line-height:20px;color:#3f4254;letter-spacing:0.46px;">Danh sách khách hàng</span><div class="abs" style="left:696px;top:826px;width:528px;height:39.500px;background:#fafafb;border:1px solid #f3f3f6;border-radius:8px"></div><div class="abs" style="left:1118px;top:834.500px;width:1px;height:23px;background:#eeeef2"></div><span class="t" style="left:705.1px;top:835.9px;font-size:15px;line-height:20px;color:#777b8c;letter-spacing:0.34px;">Tên khách hàng</span><span class="t" style="left:1126.6px;top:835.9px;font-size:15px;line-height:20px;color:#777b8c;letter-spacing:0.51px;">Hành động</span><svg style="left:928px;top:906px" width="64" height="41" viewBox="0 0 64 41"><g transform="translate(0 1)" fill="none" fill-rule="evenodd"><ellipse fill="#f5f5f5" cx="32" cy="33" rx="32" ry="7"/><g fill-rule="nonzero" stroke="#d9d9d9"><path d="M55 12.760L44.854 1.258C44.367.474 43.656 0 42.907 0H21.093c-.749 0-1.460.474-1.947 1.257L9 12.761V22h46v-9.240z"/><path d="M41.613 15.931c0-1.605.994-2.930 2.227-2.931H55v18.137C55 33.260 53.680 35 52.050 35h-40.100C10.320 35 9 33.259 9 31.137V13h11.160c1.233 0 2.227 1.323 2.227 2.928v.022c0 1.605 1.005 2.901 2.237 2.901h14.752c1.232 0 2.237-1.308 2.237-2.913v-.007z" fill="#fafafa"/></g></g></svg><span class="t" style="left:932.2px;top:954.9px;font-size:15px;line-height:20px;color:#c5c5c8;letter-spacing:0.53px;">No data</span><div class="abs" style="left:1349px;top:826px;width:528px;height:39.500px;background:#fafafb;border:1px solid #f3f3f6;border-radius:8px"></div><div class="abs" style="left:1770.5px;top:834.500px;width:1px;height:23px;background:#eeeef2"></div><span class="t" style="left:1358.1px;top:835.9px;font-size:15px;line-height:20px;color:#777b8c;letter-spacing:0.34px;">Tên khách hàng</span><span class="t" style="left:1779.1px;top:835.9px;font-size:15px;line-height:20px;color:#777b8c;letter-spacing:0.51px;">Hành động</span><svg style="left:1581px;top:906px" width="64" height="41" viewBox="0 0 64 41"><g transform="translate(0 1)" fill="none" fill-rule="evenodd"><ellipse fill="#f5f5f5" cx="32" cy="33" rx="32" ry="7"/><g fill-rule="nonzero" stroke="#d9d9d9"><path d="M55 12.760L44.854 1.258C44.367.474 43.656 0 42.907 0H21.093c-.749 0-1.460.474-1.947 1.257L9 12.761V22h46v-9.240z"/><path d="M41.613 15.931c0-1.605.994-2.930 2.227-2.931H55v18.137C55 33.260 53.680 35 52.050 35h-40.100C10.320 35 9 33.259 9 31.137V13h11.160c1.233 0 2.227 1.323 2.227 2.928v.022c0 1.605 1.005 2.901 2.237 2.901h14.752c1.232 0 2.237-1.308 2.237-2.913v-.007z" fill="#fafafa"/></g></g></svg><span class="t" style="left:1585.2px;top:954.9px;font-size:15px;line-height:20px;color:#c5c5c8;letter-spacing:0.53px;">No data</span><div class="abs" style="left:1263px;top:902px;width:46px;height:32px;background:#0060f2;border-radius:4px;box-shadow:0 2px 0 rgba(5,95,255,.08)"></div><svg style="left:1279px;top:911.500px" width="14" height="13" viewBox="0 0 14 13"><path d="M1 6.500H12.500M7.500 1.200L12.800 6.500L7.500 11.800" fill="none" stroke="#fff" stroke-width="1.200" stroke-linecap="round" stroke-linejoin="round"/></svg><div class="abs" style="left:672px;top:981px;width:1248px;height:1px;background:#f0f0f0"></div><div class="abs" style="left:1735px;top:990px;width:80px;height:32px;background:#0060f2;border-radius:4px;box-shadow:0 2px 0 rgba(5,95,255,.08)"></div><svg style="left:1751.400px;top:999.300px" width="13" height="13" viewBox="0 0 13 13"><path d="M1.100 1.100H9.300L11.900 3.700V11.900H1.100Z M4 1.100V3.300H8.800V1.100" fill="none" stroke="#fff" stroke-width="1.200" stroke-linejoin="round"/><circle cx="6.500" cy="7.700" r="1.700" fill="none" stroke="#fff" stroke-width="1.200"/></svg><span class="t" style="left:1774.1px;top:996.0px;font-size:15px;line-height:20px;color:#fff;letter-spacing:-0.43px;">Tạo</span><div class="abs" style="left:1823px;top:990px;width:81px;height:32px;background:#fff;border:1px solid #d9d9d9;border-radius:4px"></div><span class="t" style="left:1839.1px;top:996.0px;font-size:15px;line-height:20px;color:#252733;letter-spacing:0.15px;">Hủy bỏ</span><div class="abs" style="left:1901px;top:155px;width:19px;height:826px;background:#fcfcfc"></div><svg style="left:1904px;top:163.500px" width="13" height="7" viewBox="0 0 13 7"><path d="M0 7L6.500 0L13 7Z" fill="#8b8b8b"/></svg><div class="abs" style="left:1905px;top:178px;width:11px;height:663px;background:#8b8b8b;border-radius:5.500px"></div><svg style="left:1904px;top:966px" width="13" height="7" viewBox="0 0 13 7"><path d="M0 0L6.500 7L13 0Z" fill="#8b8b8b"/></svg>

<div class="abs" style="left:0;top:0;width:1920px;height:101px;background:#15052b"></div>
<div class="abs" style="left:809px;top:0;width:60px;height:1px;background:#2f7fd6"></div>
<div class="abs" style="left:869px;top:0;width:241px;height:1px;background:#fff"></div>
<div class="abs" style="left:0;top:50px;width:1920px;height:51px;background:#23045f;border-radius:8px 8px 0 0"></div>
<div class="abs" style="left:4px;top:5px;width:302px;height:40px;background:#3a008f;border-radius:10px"></div>
<div class="abs" style="left:19px;top:15px;width:20px;height:20px;border-radius:50%;background:#0b6cf5"></div>
<span class="t" style="left:24.1px;top:14.78px;font-size:14px;line-height:20px;color:#fff;font-weight:700;letter-spacing:0">A</span><span class="t" style="left:48.9px;top:15.18px;font-size:15.2px;line-height:20px;color:#fff;letter-spacing:-0.29px;">Nhóm khách hàng - Công Ty Bá</span><span class="t" style="left:257.9px;top:15.18px;font-size:15.2px;line-height:20px;color:rgba(255,255,255,.35);width:5px;overflow:hidden">n</span>
<svg style="left:280px;top:19px" width="12" height="12" viewBox="0 0 12 12"><path d="M1.5 1.5 L10.5 10.5 M10.5 1.5 L1.5 10.5" stroke="#fff" stroke-width="1.8" fill="none"/></svg>
<svg style="left:326px;top:18px" width="14" height="14" viewBox="0 0 14 14"><path d="M7 0.5V13.5M0.5 7H13.5" stroke="#e8e0ff" stroke-width="1.6" fill="none"/></svg>
<div class="abs" style="left:1771px;top:23px;width:13px;height:1px;background:#fff"></div>
<svg style="left:1827px;top:18px" width="14" height="14" viewBox="0 0 14 14"><rect x="0.6" y="2.8" width="10" height="10" rx="1.2" fill="none" stroke="#fff" stroke-width="1.1"/><path d="M3 2.8V2 Q3 0.6 4.4 0.6 H11.6 Q13 0.6 13 2 V9.2 Q13 10.6 11.6 10.6 H10.8" fill="none" stroke="#fff" stroke-width="1.1"/></svg>
<svg style="left:1885px;top:18px" width="13" height="13" viewBox="0 0 13 13"><path d="M0.5 0.5L12.5 12.5M12.5 0.5L0.5 12.5" stroke="#fff" stroke-width="1.2" fill="none"/></svg>
<!-- nav -->
<svg style="left:21px;top:65px" width="14" height="20" viewBox="0 0 14 20"><path d="M11.5 1.5L2.5 10L11.5 18.5" fill="none" stroke="#c3a9ff" stroke-width="1.8" stroke-linecap="round" stroke-linejoin="round"/></svg>
<svg style="left:58px;top:65px" width="14" height="20" viewBox="0 0 14 20"><path d="M2.5 1.5L11.5 10L2.5 18.5" fill="none" stroke="#5a3d99" stroke-width="1.8" stroke-linecap="round" stroke-linejoin="round"/></svg>
<svg style="left:91px;top:64px" width="24" height="22" viewBox="0 0 24 22"><path d="M19.2 8.6 A8.6 8.6 0 1 0 18.6 15.5" fill="none" stroke="#c3a9ff" stroke-width="1.8" stroke-linecap="round"/><circle cx="19.3" cy="9" r="2.3" fill="#c3a9ff"/></svg>
<svg style="left:279px;top:65px" width="17" height="22" viewBox="0 0 17 22"><path d="M2 3.2Q2 1.2 4 1.2H13Q15 1.2 15 3.2V19.8L8.5 15L2 19.8Z" fill="none" stroke="#c3a9ff" stroke-width="1.8" stroke-linejoin="round"/></svg>
<div class="abs" style="left:317px;top:55.5px;width:1286px;height:39px;background:#15052b;border-radius:10px"></div>
<svg style="left:328px;top:67px" width="18" height="16" viewBox="0 0 18 16"><circle cx="4" cy="4" r="2.5" fill="none" stroke="#fff" stroke-width="1.5"/><path d="M8 4H16" stroke="#fff" stroke-width="1.5" stroke-linecap="round"/><circle cx="13" cy="12" r="2.5" fill="none" stroke="#fff" stroke-width="1.5"/><path d="M1.5 12H9" stroke="#fff" stroke-width="1.5" stroke-linecap="round"/></svg>
<span class="t" style="left:363.4px;top:65.82px;font-size:17px;line-height:20px;color:#fff;letter-spacing:0.21px;">admin.aimini.vn</span><span class="t" style="left:484.9px;top:65.82px;font-size:17px;line-height:20px;color:#a89dbd;letter-spacing:0.39px;">/admin/user_group</span>
<svg style="left:1523px;top:65px" width="21" height="20" viewBox="0 0 21 20"><circle cx="8.3" cy="8.3" r="7" fill="none" stroke="#e6e0d8" stroke-width="1.5"/><path d="M5 8.3H11.6M13.5 13.5L19.5 19" stroke="#e6e0d8" stroke-width="1.5" stroke-linecap="round" fill="none"/></svg>
<div class="abs" style="left:1553.5px;top:65px;width:1.3px;height:19.5px;background:#cfc6e0"></div>
<svg style="left:1568.5px;top:63px" width="21" height="24" viewBox="0 0 21 24"><path d="M10.5 0.3L14.3 0.8L16.6 0.2L19.6 3.2L19 5.2L20.3 8.6L17.5 18.5Q16.8 20.4 10.5 23.8Q4.2 20.4 3.5 18.5L0.7 8.6L2 5.2L1.4 3.2L4.4 0.2L6.7 0.8Z" fill="#f2592a"/><path d="M10.5 4.2L14.8 4.6L16.6 7.8L15.2 11.2L13 13.6L14.2 15.6L10.5 19.2L6.8 15.6L8 13.6L5.8 11.2L4.4 7.8L6.2 4.6Z" fill="#fff"/><path d="M7 8.2L9.3 9.2L8.4 10.4ZM14 8.2L11.7 9.2L12.6 10.4ZM9.3 14.6L10.5 13.4L11.7 14.6L10.5 16Z" fill="#f2592a"/></svg>
<svg style="left:1742px;top:66px" width="21" height="19" viewBox="0 0 21 19"><rect x="1" y="1" width="19" height="17" rx="2" fill="none" stroke="#a98af5" stroke-width="1.6"/><path d="M1 4.6H20" stroke="#a98af5" stroke-width="1.6"/><circle cx="10.4" cy="10.8" r="2.8" fill="none" stroke="#a98af5" stroke-width="1.6"/><path d="M12.6 13L14.8 15.2" stroke="#a98af5" stroke-width="1.8" stroke-linecap="round"/></svg>
<div class="abs" style="left:1781px;top:66px;width:2px;height:19px;background:#14032f"></div>
<svg style="left:1802px;top:66px" width="21" height="19" viewBox="0 0 21 19"><rect x="1" y="1" width="19" height="17" rx="2" fill="none" stroke="#a98af5" stroke-width="1.6"/><path d="M14.5 1H18Q20 1 20 3V16Q20 18 18 18H14.5Z" fill="#a98af5"/></svg>
<div class="abs" style="left:1833px;top:61.5px;width:38.5px;height:26.5px;border:1px solid #5b3aa8;border-radius:12px;background:#1c0450"></div>
<svg style="left:1843px;top:71px" width="19" height="8" viewBox="0 0 19 8"><path d="M0 0.4H19V1.6H18.3L17.2 5.6Q16.7 7.4 14.8 7.4H13.2Q11.6 7.4 11 5.8L9.9 2.6H9.1L8 5.8Q7.4 7.4 5.8 7.4H4.2Q2.3 7.4 1.8 5.6L0.7 1.6H0Z" fill="#fff"/></svg>
<svg style="left:1882px;top:66.5px" width="21" height="18" viewBox="0 0 21 18"><path d="M0 1.2H21M0 8.9H21M0 16.6H21" stroke="#a98af5" stroke-width="1.7" fill="none"/></svg>

</body></html>
